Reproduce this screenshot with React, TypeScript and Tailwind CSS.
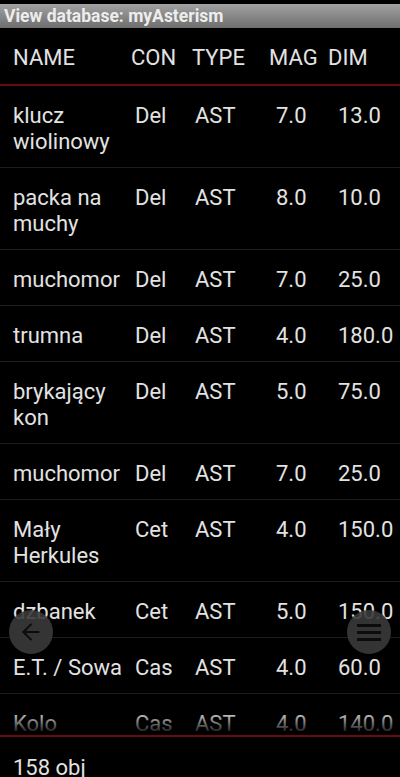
import { ArrowLeft } from "lucide-react";

type Row = { name: string; con: string; type: string; mag: string; dim: string };

const rows: Row[] = [
  { name: "klucz\nwiolinowy", con: "Del", type: "AST", mag: "7.0", dim: "13.0" },
  { name: "packa na\nmuchy", con: "Del", type: "AST", mag: "8.0", dim: "10.0" },
  { name: "muchomor", con: "Del", type: "AST", mag: "7.0", dim: "25.0" },
  { name: "trumna", con: "Del", type: "AST", mag: "4.0", dim: "180.0" },
  { name: "brykający\nkon", con: "Del", type: "AST", mag: "5.0", dim: "75.0" },
  { name: "muchomor", con: "Del", type: "AST", mag: "7.0", dim: "25.0" },
  { name: "Mały\nHerkules", con: "Cet", type: "AST", mag: "4.0", dim: "150.0" },
  { name: "dzbanek", con: "Cet", type: "AST", mag: "5.0", dim: "150.0" },
  { name: "E.T. / Sowa", con: "Cas", type: "AST", mag: "4.0", dim: "60.0" },
  { name: "Kolo", con: "Cas", type: "AST", mag: "4.0", dim: "140.0" },
];

export default function App() {
  return (
    <div
      className="relative h-[777px] w-[400px] overflow-hidden bg-black text-[#e2e2e2] flex flex-col"
      style={{ fontFamily: "Roboto, 'Noto Sans', sans-serif" }}
    >
      <div className="h-[4px] flex-none bg-black" />
      <div className="h-[24px] flex-none bg-gradient-to-b from-[#a2a2a2] to-[#6e6e6e] pl-[4px] text-[17.5px] font-bold leading-[25px] text-[#ededed]">
        View database: myAsterism
      </div>

      <div className="h-[56px] flex-none grid grid-cols-[118px_61px_77px_59px_1fr] items-center pl-[13px] pt-[3px] text-[22px] leading-[26px]">
        <span>NAME</span>
        <span>CON</span>
        <span>TYPE</span>
        <span>MAG</span>
        <span>DIM</span>
      </div>
      <div className="h-[2px] flex-none bg-[#6a0b0b]" />

      <div className="relative h-[649px] flex-none overflow-hidden">
        {rows.map((r, i) => (
          <div
            key={i}
            className="grid grid-cols-[122px_60px_81px_62px_1fr] border-b border-[#1c1c1c] pl-[13px] pt-[17px] pb-[12px] text-[22px] leading-[26px]"
          >
            <span className="whitespace-pre-line">{r.name}</span>
            <span>{r.con}</span>
            <span>{r.type}</span>
            <span>{r.mag}</span>
            <span>{r.dim}</span>
          </div>
        ))}
        <div className="absolute inset-x-0 bottom-0 h-[24px] bg-gradient-to-b from-black/0 to-black" />
      </div>
      <div className="h-[2px] flex-none bg-[#6a0b0b]" />

      <div className="flex-1 pl-[13px] pt-[18px] text-[22px] leading-[26px]">158 obj</div>

      <button className="absolute left-[9px] top-[610px] flex h-[44px] w-[44px] items-center justify-center rounded-full bg-[#3a3a3a]/90">
        <ArrowLeft className="h-[26px] w-[26px] text-[#0c0c0c]" strokeWidth={1.8} />
      </button>
      <button className="absolute left-[347px] top-[610px] flex h-[44px] w-[44px] flex-col items-center justify-center gap-[4px] rounded-full bg-[#3a3a3a]/90">
        <span className="h-[3px] w-[24px] bg-[#0c0c0c]" />
        <span className="h-[3px] w-[24px] bg-[#0c0c0c]" />
        <span className="h-[3px] w-[24px] bg-[#0c0c0c]" />
      </button>
    </div>
  );
}
